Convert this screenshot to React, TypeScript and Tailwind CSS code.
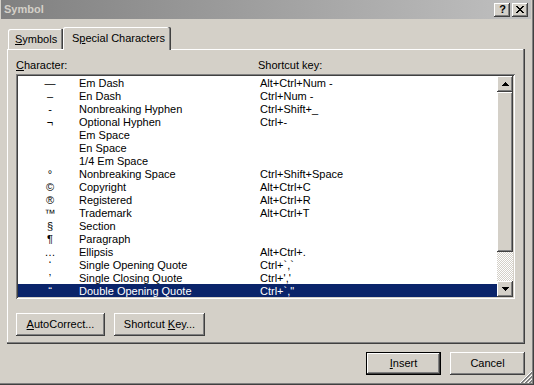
import React from "react";

const rows: [string, string, string][] = [
  ["\u2014", "Em Dash", "Alt+Ctrl+Num -"],
  ["\u2013", "En Dash", "Ctrl+Num -"],
  ["-", "Nonbreaking Hyphen", "Ctrl+Shift+_"],
  ["\u00ac", "Optional Hyphen", "Ctrl+-"],
  ["", "Em Space", ""],
  ["", "En Space", ""],
  ["", "1/4 Em Space", ""],
  ["\u00b0", "Nonbreaking Space", "Ctrl+Shift+Space"],
  ["\u00a9", "Copyright", "Alt+Ctrl+C"],
  ["\u00ae", "Registered", "Alt+Ctrl+R"],
  ["\u2122", "Trademark", "Alt+Ctrl+T"],
  ["\u00a7", "Section", ""],
  ["\u00b6", "Paragraph", ""],
  ["\u2026", "Ellipsis", "Alt+Ctrl+."],
  ["\u2018", "Single Opening Quote", "Ctrl+`,`"],
  ["\u2019", "Single Closing Quote", "Ctrl+','"],
  ["\u201c", "Double Opening Quote", 'Ctrl+`,"'],
];

const raised =
  "bg-[#d4d0c8] shadow-[inset_-1px_-1px_0_#404040,inset_1px_1px_0_#ffffff,inset_-2px_-2px_0_#808080]";

function Grip() {
  const rects: React.ReactNode[] = [];
  const white = [11, 15, 19];
  const gray = [12, 13, 16, 17, 20, 21];
  for (let x = 0; x < 12; x++) {
    for (let y = 0; y < 12; y++) {
      const s = x + y;
      if (white.includes(s))
        rects.push(<rect key={`${x}-${y}`} x={x} y={y} width={1} height={1} fill="#ffffff" />);
      else if (gray.includes(s))
        rects.push(<rect key={`${x}-${y}`} x={x} y={y} width={1} height={1} fill="#808080" />);
    }
  }
  return (
    <svg width="12" height="12" viewBox="0 0 12 12" shapeRendering="crispEdges" className="absolute right-[2px] bottom-[2px]">
      {rects}
    </svg>
  );
}

function Btn({ children, w, isDefault }: { children: React.ReactNode; w: string; isDefault?: boolean }) {
  if (isDefault) {
    return (
      <div className={`${w} h-[23px] border border-black`}>
        <div className={`h-full w-full ${raised} flex items-center justify-center text-black`}>{children}</div>
      </div>
    );
  }
  return <div className={`${w} h-[23px] ${raised} flex items-center justify-center text-black`}>{children}</div>;
}

export default function App() {
  return (
    <div className="w-[534px] h-[385px] relative bg-[#d4d0c8] flex flex-col font-['Liberation_Sans',Arial,sans-serif] text-[11px] leading-[13px] text-black shadow-[inset_-1px_-1px_0_#404040,inset_-2px_-2px_0_#808080] overflow-hidden">
      {/* Title bar */}
      <div className="ml-[1px] w-[530px] h-[19px] bg-[linear-gradient(to_right,#808080,#c0c0c0)] flex items-center justify-between pl-[3px] pr-[3px]">
        <span className="font-bold text-[#d4d0c8] text-[11px]">Symbol</span>
        <div className="flex gap-[2px]">
          <div className={`w-[16px] h-[14px] ${raised} flex items-center justify-center`}>
            <span className="font-bold text-[11px] leading-[11px] pl-[1px]">?</span>
          </div>
          <div className={`w-[16px] h-[14px] ${raised} flex items-center justify-center`}>
            <svg width="8" height="7" viewBox="0 0 8 7" shapeRendering="crispEdges">
              <path d="M0 0h2v1h-2zM6 0h2v1h-2zM1 1h2v1h-2zM5 1h2v1h-2zM2 2h4v1h-4zM3 3h2v1h-2zM2 4h4v1h-4zM1 5h2v1h-2zM5 5h2v1h-2zM0 6h2v1h-2zM6 6h2v1h-2z" fill="#000" />
            </svg>
          </div>
        </div>
      </div>

      {/* Tabs */}
      <div className="mt-[8px] h-[22px] pl-[8px] flex items-end">
        <div className="w-[55px] h-[20px] rounded-tl-[2px] shadow-[inset_-1px_0_0_#404040,inset_-2px_0_0_#808080,inset_1px_1px_0_#ffffff] flex items-center pl-[7px] pt-[1px]">
          <span>
            <span className="underline">S</span>ymbols
          </span>
        </div>
        <div className="relative z-10 w-[108px] h-[23px] -mb-[1px] bg-[#d4d0c8] rounded-t-[2px] shadow-[inset_-1px_0_0_#404040,inset_-2px_0_0_#808080,inset_1px_1px_0_#ffffff] flex items-start pt-[5px] pl-[9px]">
          <span>
            S<span className="underline">p</span>ecial Characters
          </span>
        </div>
      </div>

      {/* Panel */}
      <div className="ml-[7px] w-[518px] h-[295px] shadow-[inset_-1px_-1px_0_#404040,inset_-2px_-2px_0_#808080,inset_1px_1px_0_#ffffff] pl-[9px] pt-[10px] flex flex-col">
        <div className="flex h-[13px]">
          <div className="w-[242px]">
            <span className="underline">C</span>haracter:
          </div>
          <div>Shortcut key:</div>
        </div>
        <div className="mt-[2px] w-[499px] h-[225px] p-[2px] bg-white shadow-[inset_1px_1px_0_#808080,inset_-1px_-1px_0_#ffffff,inset_2px_2px_0_#404040,inset_-2px_-2px_0_#d4d0c8] flex">
          <div className="w-[479px] flex flex-col">
            {rows.map(([sym, name, key], i) => {
              const sel = i === rows.length - 1;
              return (
                <div
                  key={i}
                  className={`h-[13px] pt-[1px] leading-[12px] flex whitespace-pre ${sel ? "bg-[#0a246a] text-white" : "text-black"}`}
                >
                  <div className="ml-[3px] w-[58px] text-center">{sym}</div>
                  <div className="w-[181px]">{name}</div>
                  <div>{key}</div>
                </div>
              );
            })}
          </div>
          <div className="w-[16px] flex flex-col">
            <div className={`h-[16px] ${raised} flex items-center justify-center`}>
              <svg width="7" height="4" viewBox="0 0 7 4" shapeRendering="crispEdges">
                <path d="M3 0h1v1h-1zM2 1h3v1h-3zM1 2h5v1h-5zM0 3h7v1h-7z" fill="#000" />
              </svg>
            </div>
            <div className={`h-[160px] ${raised}`} />
            <div className="flex-1 [background-image:repeating-conic-gradient(#ffffff_0_25%,#d4d0c8_0_50%)] [background-size:2px_2px]" />
            <div className={`h-[16px] ${raised} flex items-center justify-center`}>
              <svg width="7" height="4" viewBox="0 0 7 4" shapeRendering="crispEdges">
                <path d="M0 0h7v1h-7zM1 1h5v1h-5zM2 2h3v1h-3zM3 3h1v1h-1z" fill="#000" />
              </svg>
            </div>
          </div>
        </div>
        <div className="mt-[14px] flex gap-[9px]">
          <Btn w="w-[89px]">
            <span>
              <span className="underline">A</span>utoCorrect...
            </span>
          </Btn>
          <Btn w="w-[91px]">
            <span>
              Shortcut <span className="underline">K</span>ey...
            </span>
          </Btn>
        </div>
      </div>

      {/* Bottom buttons */}
      <div className="mt-[8px] flex justify-end gap-[9px] pr-[9px]">
        <Btn w="w-[75px]" isDefault>
          <span>
            <span className="underline">I</span>nsert
          </span>
        </Btn>
        <Btn w="w-[75px]">Cancel</Btn>
      </div>

      <Grip />
    </div>
  );
}
